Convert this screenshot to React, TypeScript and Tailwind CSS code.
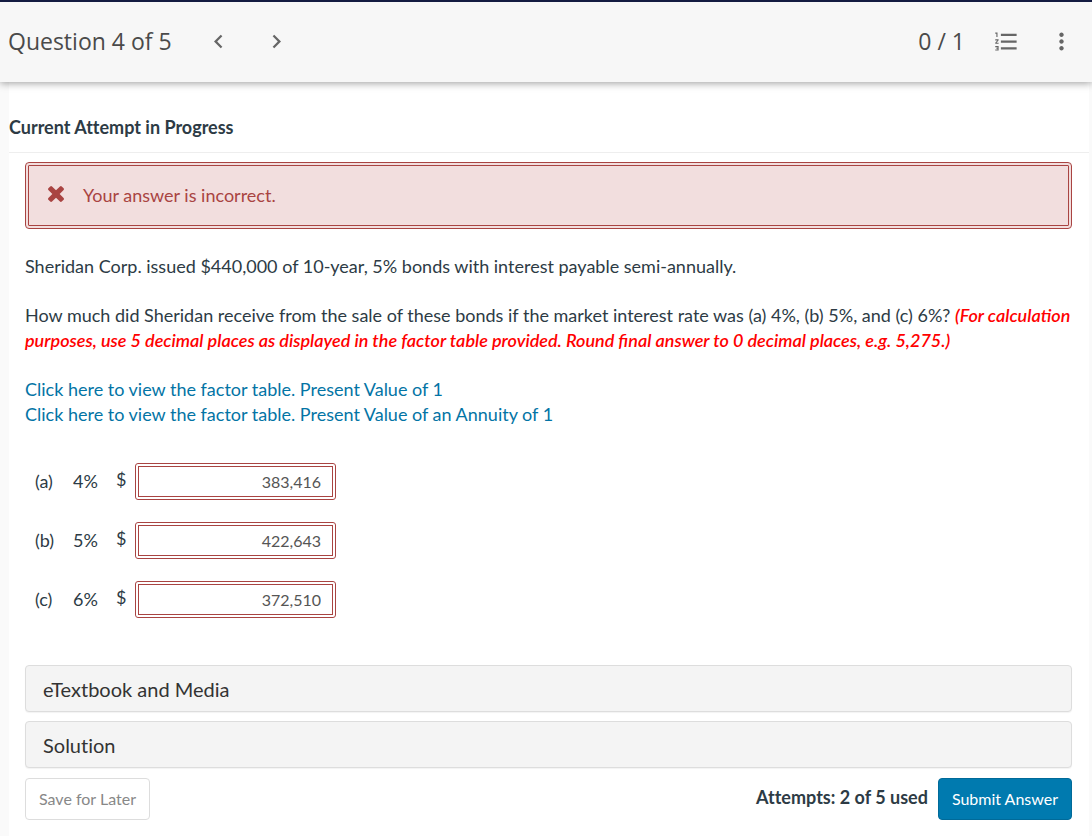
import React, { useState } from 'react';
import { MdChevronLeft, MdChevronRight, MdFormatListNumbered, MdMoreVert } from 'react-icons/md';

interface AnswerRow {
  part: string;
  rate: string;
  value: string;
}

const INITIAL_ANSWERS: AnswerRow[] = [
  { part: '(a)', rate: '4%', value: '383,416' },
  { part: '(b)', rate: '5%', value: '422,643' },
  { part: '(c)', rate: '6%', value: '372,510' },
];

const RESOURCES = ['eTextbook and Media', 'Solution'];

const TimesIcon: React.FC = () => (
  <svg viewBox="302 366 1188 1188" className="w-4 h-4 mb-1 shrink-0 fill-current" aria-hidden="true">
    <path d="M1490 1322q0 40-28 68l-136 136q-28 28-68 28t-68-28l-294-294-294 294q-28 28-68 28t-68-28l-136-136q-28-28-28-68t28-68l294-294-294-294q-28-28-28-68t28-68l136-136q28-28 68-28t68 28l294 294 294-294q28-28 68-28t68 28l136 136q28 28 28 68t-28 68l-294 294 294 294q28 28 28 68z" />
  </svg>
);

const Header: React.FC = () => (
  <header className="relative flex items-center justify-between h-[82px] pl-2 pr-[17px] pb-0.5 border-t-2 border-[#141b41] bg-[#f7f7f7] text-[#4a4a4a] font-['Open_Sans',sans-serif] shadow-[0_1px_8px_rgba(0,0,0,0.4)]">
    <div className="flex items-center">
      <h1 className="text-[23px]">Question 4 of 5</h1>
      <nav className="flex items-center gap-[31px] ml-[33px] text-[#666]">
        <button type="button" aria-label="Previous question">
          <MdChevronLeft size={27} />
        </button>
        <button type="button" aria-label="Next question">
          <MdChevronRight size={27} />
        </button>
      </nav>
    </div>
    <div className="flex items-center gap-7 text-[#666]">
      <span className="text-[23px] text-[#4a4a4a]">0 / 1</span>
      <button type="button" aria-label="Question list">
        <MdFormatListNumbered size={27} />
      </button>
      <button type="button" aria-label="More options">
        <MdMoreVert size={27} />
      </button>
    </div>
  </header>
);

const App: React.FC = () => {
  const [answers, setAnswers] = useState<AnswerRow[]>(INITIAL_ANSWERS);

  const handleChange = (index: number, value: string) => {
    setAnswers(prev => prev.map((row, i) => (i === index ? { ...row, value } : row)));
  };

  return (
    <div className="min-h-screen flex flex-col bg-[#fafafa] font-['Lato',sans-serif] text-lg leading-[25px] text-[#2d3b45] [font-variant-ligatures:none]">
      <Header />

      <main className="flex-1 ml-[9px] mr-[3px] bg-white pt-8 pb-4">
        <h2 className="pb-3 pt-px border-b border-[#eee] font-bold">Current Attempt in Progress</h2>

        <div className="pl-4 pr-[17px] pt-[9px]">
          {/* Result banner */}
          <div role="alert" className="flex items-center gap-[19px] h-[67px] px-[19px] rounded border-4 border-double border-[#a94442] bg-[#f2dede] text-[#a94442]">
            <TimesIcon />
            <span>Your answer is incorrect.</span>
          </div>

          {/* Question text */}
          <div className="flex flex-col gap-6 mt-[25px]">
            <p>Sheridan Corp. issued $440,000 of 10-year, 5% bonds with interest payable semi-annually.</p>
            <p>
              How much did Sheridan receive from the sale of these bonds if the market interest rate was (a) 4%, (b) 5%, and (c) 6%?{' '}
              <strong className="italic font-semibold text-[#f00] [font-variant-ligatures:normal]">
                (For calculation purposes, use 5 decimal places as displayed in the factor table provided. Round final answer to 0 decimal places, e.g. 5,275.)
              </strong>
            </p>
            <div className="flex flex-col items-start text-[#0374a5]">
              <a href="#pv">Click here to view the factor table. Present Value of 1</a>
              <a href="#annuity">Click here to view the factor table. Present Value of an Annuity of 1</a>
            </div>
          </div>

          {/* Answers */}
          <div className="flex flex-col gap-[22px] mt-9 pl-[10px]">
            {answers.map((row, i) => (
              <div key={row.part} className="flex items-center">
                <label htmlFor={`answer-${i}`} className="flex items-center">
                  <span className="w-[38px]">{row.part}</span>
                  <span className="w-[43px]">{row.rate}</span>
                  <span className="w-[19px] pb-1">$</span>
                </label>
                <input
                  id={`answer-${i}`}
                  type="text"
                  value={row.value}
                  onChange={(e) => handleChange(i, e.target.value)}
                  className="w-[201px] h-[37px] px-[11px] rounded-[3px] border-4 border-double border-[#a94442] bg-white text-right text-base text-[#555] focus:outline-none"
                />
              </div>
            ))}
          </div>

          {/* Resources */}
          <div className="flex flex-col gap-[9px] mt-[47px]">
            {RESOURCES.map((title) => (
              <button
                key={title}
                type="button"
                className="h-[47px] px-[17px] rounded border border-[#ddd] bg-[#f4f4f4] text-left text-xl text-[#333] shadow-[0_1px_1px_rgba(0,0,0,0.05)]"
              >
                {title}
              </button>
            ))}
          </div>

          <div className="flex items-center justify-between mt-[10px]">
            <button type="button" className="h-[42px] px-[13px] rounded border border-[#ddd] bg-white text-base text-[#888]">
              Save for Later
            </button>
            <div className="flex items-center gap-[10px]">
              <span className="font-bold pb-1">Attempts: 2 of 5 used</span>
              <button type="button" className="h-[42px] px-[13px] rounded border border-[#006a99] bg-[#007aaf] text-base text-white">
                Submit Answer
              </button>
            </div>
          </div>
        </div>
      </main>
    </div>
  );
};

export default App;
